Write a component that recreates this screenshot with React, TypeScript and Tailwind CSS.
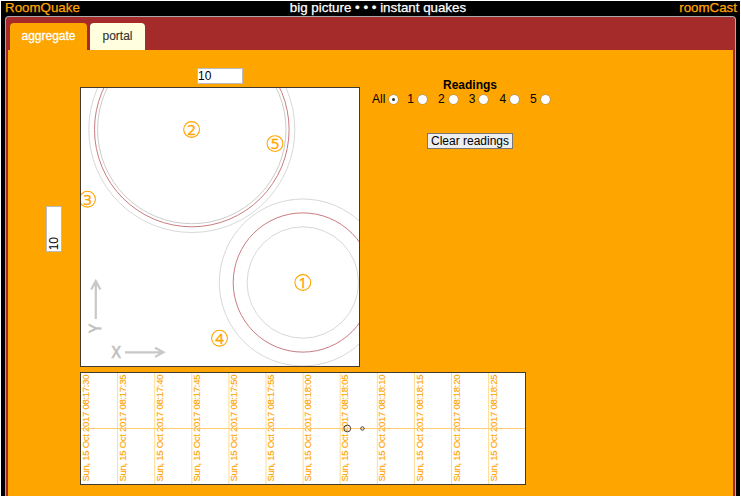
import React, { useState } from "react";

const stations = [
  { id: "1", x: 222.8, y: 195.5 },
  { id: "2", x: 111.6, y: 42.5 },
  { id: "3", x: 7.5, y: 112.2 },
  { id: "4", x: 139.5, y: 251.2 },
  { id: "5", x: 195, y: 56.6 },
];

const rings = [
  { cx: 111.8, cy: 42.5, r: 103, color: "#d8d8d8" },
  { cx: 111.8, cy: 42.5, r: 97.3, color: "#c97b80" },
  { cx: 111.8, cy: 42.5, r: 94.2, color: "#cccccc" },
  { cx: 222.8, cy: 195.5, r: 83.5, color: "#d8d8d8" },
  { cx: 222.8, cy: 195.5, r: 69.6, color: "#c97b80" },
  { cx: 222.8, cy: 195.5, r: 55.7, color: "#d8d8d8" },
];

const ticks = [
  "08:17:30", "08:17:35", "08:17:40", "08:17:45", "08:17:50", "08:17:55",
  "08:18:00", "08:18:05", "08:18:10", "08:18:15", "08:18:20", "08:18:25",
];

function RoomMap() {
  return (
    <svg width="280" height="280" viewBox="0 0 280 280" className="block shrink-0 bg-white">
      {rings.map((c, i) => (
        <circle key={i} cx={c.cx} cy={c.cy} r={c.r} fill="none" stroke={c.color} strokeWidth="1" />
      ))}
      {stations.map((s) => (
        <g key={s.id}>
          <circle cx={s.x} cy={s.y} r="7.9" fill="none" stroke="#ffa500" strokeWidth="1.1" />
          <text x={s.x} y={s.y + 5.3} textAnchor="middle" fontSize="15" fill="#ffa500" stroke="#ffa500" strokeWidth="0.4" className="font-['Open_Sans',sans-serif]">{s.id}</text>
        </g>
      ))}
      <g stroke="#c8c8c8" strokeWidth="2.2" fill="none">
        <path d="M15.8 232V194.5M11.2 202.5L15.8 194L20.4 202.5" />
        <path d="M45 265.3H83M75 260.7L83.5 265.3L75 269.9" />
      </g>
      <g fill="#c0c0c0" stroke="#c0c0c0" strokeWidth="0.7" fontSize="15.5" className="font-['Open_Sans',sans-serif]">
        <text x="36.3" y="270.9" textAnchor="middle">X</text>
        <text transform="translate(20.6 241.5) rotate(-90)" textAnchor="middle">Y</text>
      </g>
      <rect x="0.5" y="0.5" width="279" height="279" fill="none" stroke="#403a30" />
    </svg>
  );
}

function Timeline() {
  return (
    <svg width="446" height="113" viewBox="0 0 446 113" className="block bg-white">
      {ticks.map((t, i) => (
        <g key={t}>
          <line x1={0.5 + i * 37.1} x2={0.5 + i * 37.1} y1="1" y2="112" stroke="#ffdb99" />
          <text transform={`translate(${8.6 + i * 37.1} 109.5) rotate(-90)`} fontSize="9.5" textLength="107" fill="#ffa500" stroke="#ffa500" strokeWidth="0.15" className="font-['Liberation_Sans',sans-serif]">
            {"Sun, 15 Oct 2017 " + t}
          </text>
        </g>
      ))}
      <line x1="0" x2="446" y1="56.5" y2="56.5" stroke="#ffcd70" />
      <circle cx="267.3" cy="56.5" r="3.4" fill="none" stroke="#4d4030" />
      <circle cx="282.4" cy="56.5" r="1.7" fill="none" stroke="#4d4030" />
      <rect x="0.5" y="0.5" width="445" height="112" fill="none" stroke="#403a30" />
    </svg>
  );
}

export default function App() {
  const [selected, setSelected] = useState("All");
  return (
    <div className="h-[497px] w-[741px] overflow-hidden bg-white p-px font-['Liberation_Sans',Arial,sans-serif] text-black">
      <div className="flex h-full flex-col bg-black">
        <header className="flex h-[15px] shrink-0 justify-between pr-[3px] pl-1 text-[13.33px] leading-[14px] whitespace-nowrap text-[#ffa500]">
          <span className="w-[200px] [-webkit-text-stroke:0.25px]">RoomQuake</span>
          <span className="pl-3.5 text-white [-webkit-text-stroke:0.25px]">big picture • • • instant quakes</span>
          <span className="w-[200px] text-right [-webkit-text-stroke:0.25px]">roomCast</span>
        </header>
        <main className="mr-1 ml-1 flex w-[731px] grow flex-col rounded-t-sm border border-b-0 border-[#aaa] bg-[#a52a2a] px-0.5">
          <nav className="flex h-[33px] shrink-0 items-end gap-[3px] pl-0.5 text-xs">
            <button className="h-[27px] w-[77px] rounded-t-sm bg-[#ffa500] pb-px text-white [-webkit-text-stroke:0.3px]">aggregate</button>
            <button className="h-[27px] w-[55px] rounded-t-sm bg-[#ffffe0] pb-px text-[#333] [-webkit-text-stroke:0.15px]">portal</button>
          </nav>
          <section className="grow bg-[#ffa500] pt-[18px]">
            <div className="flex">
              <div className="flex w-[72px] justify-end pt-[138px] pr-[18px]">
                <div className="flex h-[46px] w-4 items-end justify-center border border-[#bbb] bg-white pb-px text-xs">
                  <span className="rotate-180 leading-[14px] [writing-mode:vertical-rl]">10</span>
                </div>
              </div>
              <div className="flex w-[280px] flex-col items-center">
                <div className="mb-[3px] h-4 w-[46px] border border-[#bbb] bg-white text-xs leading-[15px]">10</div>
                <RoomMap />
              </div>
              <div className="flex flex-col pt-2.5 pl-3">
                <h2 className="w-[196px] text-center text-xs leading-[14px] font-bold">Readings</h2>
                <div className="flex text-xs leading-[14px]">
                  {["All", "1", "2", "3", "4", "5"].map((v) => (
                    <label key={v} className={v === "All" ? "mr-[9px] flex items-center gap-1" : "mr-2.5 flex w-[20.7px] items-center gap-1"}>
                      {v}
                      <input type="radio" name="reading" checked={selected === v} onChange={() => setSelected(v)} className="peer sr-only" />
                      <span className="mt-px flex size-[9px] shrink-0 items-center justify-center rounded-full bg-white shadow-[0_0_0_0.5px_#888]">
                        {selected === v && <span className="size-[3px] rounded-full bg-[#333]" />}
                      </span>
                    </label>
                  ))}
                </div>
                <button className="mt-[27px] ml-[55px] h-4 w-[86px] border border-[#777] bg-[#eee] text-xs leading-[14px] whitespace-nowrap">Clear readings</button>
              </div>
            </div>
            <div className="mt-[5px] ml-[72px]"><Timeline /></div>
          </section>
        </main>
      </div>
    </div>
  );
}
